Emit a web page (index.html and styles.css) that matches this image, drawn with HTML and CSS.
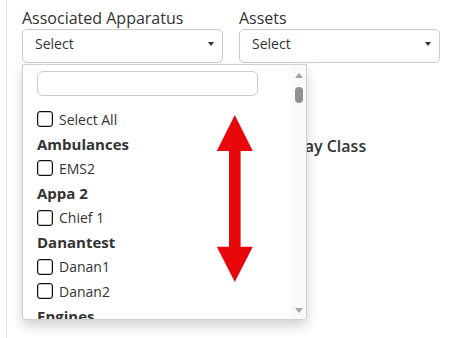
FILE: index.html
```html
<!DOCTYPE html>
<html lang="en">

<head>
    <meta charset="UTF-8">
    <meta name="viewport" content="width=device-width, initial-scale=1.0">
    <title>Apparatus</title>
    <link rel="stylesheet" href="styles.css">
</head>

<body>
    <div class="page">
        <div class="form-row">
            <div class="field">
                <label class="field-label">Associated Apparatus</label>
                <div class="select-wrap">
                    <div class="select-box"><span>Select</span><i class="caret"></i></div>
                    <!-- open dropdown -->
                    <div class="dropdown">
                        <div class="dropdown-body">
                            <div class="search"><input type="text" class="search-input"></div>
                            <ul class="options">
                                <li class="option"><span class="check"></span>Select All</li>
                                <li class="group">Ambulances</li>
                                <li class="option"><span class="check"></span>EMS2</li>
                                <li class="group">Appa 2</li>
                                <li class="option"><span class="check"></span>Chief 1</li>
                                <li class="group">Danantest</li>
                                <li class="option"><span class="check"></span>Danan1</li>
                                <li class="option"><span class="check"></span>Danan2</li>
                                <li class="group">Engines</li>
                            </ul>
                        </div>
                        <div class="scrollbar">
                            <span class="scroll-up"></span>
                            <span class="scroll-thumb"></span>
                            <span class="scroll-down"></span>
                        </div>
                    </div>
                </div>
            </div>
            <div class="field">
                <label class="field-label">Assets</label>
                <div class="select-wrap">
                    <div class="select-box"><span>Select</span><i class="caret"></i></div>
                </div>
            </div>
        </div>
        <div class="form-row second-row">
            <div class="field"></div>
            <div class="field">
                <label class="field-label strong indent">Day Class</label>
            </div>
        </div>
    </div>

    <svg class="arrow" width="38" height="170" viewBox="0 0 38 170">
        <polygon points="18.8,1 36.8,37 24.6,37 24.6,132.7 36.8,132.7 18.8,168 0.8,132.7 13,132.7 13,37 0.8,37" fill="#e8080b" />
    </svg>
</body>

</html>
```

FILE: styles.css
```css
* {
    box-sizing: border-box;
    margin: 0;
    padding: 0;
}
body {
    font-family: "Open Sans", "Liberation Sans", sans-serif;
    color: #333;
    background: #fff;
}
.page {
    margin-left: 6px;
    border-left: 1px solid #e2e2e2;
    min-height: 338px;
    padding: 7px 0 0 15px;
}
.form-row {
    display: grid;
    grid-template-columns: 201px 201px;
    gap: 16px;
}
.second-row {
    margin-top: 72px;
}
.field-label {
    display: block;
    font-size: 16px;
    line-height: 22px;
}
.field-label.strong {
    font-weight: 600;
}
.field-label.indent {
    padding-left: 54px;
}
.select-wrap {
    position: relative;
}
.select-box {
    height: 34px;
    border: 1px solid #ccc;
    border-radius: 5px;
    padding: 0 8px 4px 12px;
    display: flex;
    align-items: center;
    justify-content: space-between;
    font-size: 14px;
    line-height: 20px;
    background: #fff;
}
.caret {
    width: 0;
    height: 0;
    border-left: 3px solid transparent;
    border-right: 3px solid transparent;
    border-top: 4px solid #333;
}

/* dropdown */
.dropdown {
    position: absolute;
    top: calc(100% + 1px);
    left: 0;
    width: 285px;
    height: 256px;
    background: #fff;
    border: 1px solid #d0d0d0;
    border-radius: 0 0 4px 4px;
    box-shadow: 0 6px 12px rgba(0, 0, 0, .175);
    display: flex;
    overflow: hidden;
    z-index: 10;
}
.dropdown-body {
    flex: 1;
    overflow: hidden;
}
.search {
    padding: 6px 0 0 14px;
}
.search-input {
    display: block;
    width: 221px;
    height: 25px;
    border: 1px solid #ccc;
    border-radius: 6px;
    outline: none;
}
.options {
    list-style: none;
    padding-top: 11px;
    font-size: 14px;
}
.option,
.group {
    height: 24.6px;
    display: flex;
    align-items: center;
    padding-left: 14px;
}
.option {
    gap: 6px;
}
.group {
    font-size: 15px;
    font-weight: 700;
}
.check {
    width: 16px;
    height: 16px;
    border: 1px solid #111;
    border-radius: 3px;
    box-shadow: inset 0 0 0 0.5px rgba(0, 0, 0, .45);
}
.scrollbar {
    width: 15px;
    background: #fafafa;
    display: flex;
    flex-direction: column;
    align-items: center;
    padding: 8px 0 6px;
}
.scroll-up,
.scroll-down {
    width: 0;
    height: 0;
    border-left: 4px solid transparent;
    border-right: 4px solid transparent;
}
.scroll-up {
    border-bottom: 5px solid #a3a3a3;
}
.scroll-down {
    margin-top: auto;
    border-top: 5px solid #a3a3a3;
}
.scroll-thumb {
    width: 8px;
    height: 16px;
    margin-top: 9px;
    border-radius: 4px;
    background: #909090;
}
.arrow {
    position: absolute;
    left: 216px;
    top: 114px;
    z-index: 20;
}
```
